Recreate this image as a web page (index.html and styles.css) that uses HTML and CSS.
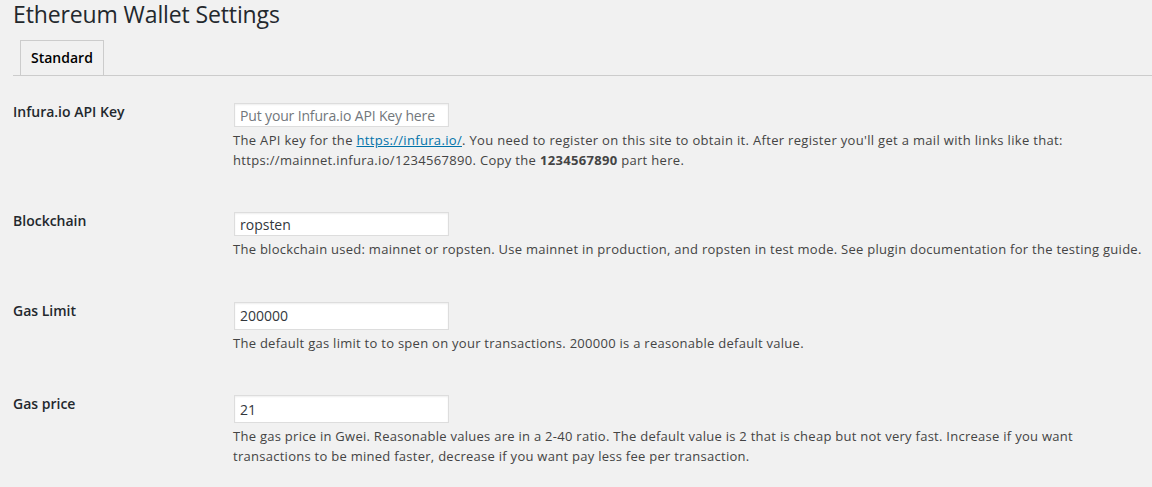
FILE: index.html
```html
<!DOCTYPE html>
<html lang="en">
<head>
<meta charset="utf-8">
<title>Ethereum Wallet Settings</title>
<link rel="stylesheet" href="styles.css">
</head>
<body>
<div class="wrap">
  <h1 class="title">Ethereum Wallet Settings</h1>
  <nav class="tabs">
    <a class="tab tab-active" href="#">Standard</a>
  </nav>
  <div class="form">
    <div class="row">
      <div class="label">Infura.io API Key</div>
      <div class="field">
        <input class="input" type="text" placeholder="Put your Infura.io API Key here">
        <p class="desc desc-wide">The API key for the <a class="link" href="#">https://infura.io/</a>. You need to register on this site to obtain it. After register you'll get a mail with links like that:<br>https://mainnet.infura.io/1234567890. Copy the <strong>1234567890</strong> part here.</p>
      </div>
    </div>
    <div class="row">
      <div class="label">Blockchain</div>
      <div class="field">
        <input class="input" type="text" value="ropsten">
        <p class="desc">The blockchain used: mainnet or ropsten. Use mainnet in production, and ropsten in test mode. See plugin documentation for the testing guide.</p>
      </div>
    </div>
    <div class="row">
      <div class="label">Gas Limit</div>
      <div class="field">
        <input class="input input-tall" type="text" value="200000">
        <p class="desc">The default gas limit to to spen on your transactions. 200000 is a reasonable default value.</p>
      </div>
    </div>
    <div class="row">
      <div class="label">Gas price</div>
      <div class="field">
        <input class="input input-tall" type="text" value="21">
        <p class="desc">The gas price in Gwei. Reasonable values are in a 2-40 ratio. The default value is 2 that is cheap but not very fast. Increase if you want<br>transactions to be mined faster, decrease if you want pay less fee per transaction.</p>
      </div>
    </div>
  </div>
</div>
</body>
</html>
```
FILE: styles.css
```css
html, body {
  margin: 0;
  padding: 0;
  background: #f1f1f1;
}
body {
  font-family: "Open Sans", "Noto Sans", sans-serif;
  color: #444;
  font-size: 13px;
}
.wrap {
  padding-left: 13px;
  padding-top: 0;
}
.title {
  margin: 0;
  font-size: 23px;
  font-weight: 400;
  line-height: 29px;
  letter-spacing: -0.12px;
  color: #23282d;
  height: 40px;
}
.tabs {
  display: flex;
  border-bottom: 1px solid #ccc;
  padding-left: 7px;
}
.tab {
  display: block;
  border: 1px solid #ccc;
  border-bottom: none;
  padding: 5px 10px;
  font-size: 14px;
  line-height: 24px;
  font-weight: 600;
  color: #000;
  text-decoration: none;
  background: #f1f1f1;
}
.form {
  display: flex;
  flex-direction: column;
  gap: 42px;
  padding-top: 27px;
}
.row {
  display: flex;
  align-items: flex-start;
}
.label {
  width: 220px;
  flex: none;
  font-size: 14px;
  font-weight: 600;
  line-height: 18px;
  color: #23282d;
}
.field {
  flex: 1;
  min-width: 0;
}
.input {
  display: block;
  box-sizing: border-box;
  width: 215px;
  height: 24px;
  margin: 0 0 0 1px;
  padding: 0 5px;
  border: 1px solid #ddd;
  background: #fff;
  box-shadow: inset 0 1px 2px rgba(0,0,0,.07);
  font-family: inherit;
  font-size: 14px;
  color: #32373c;
  outline: none;
}
.input::placeholder {
  color: #72777c;
  letter-spacing: -0.15px;
}
.input-tall {
  height: 28px;
}
.desc {
  margin: 4px 0 0;
  font-size: 13px;
  line-height: 19.5px;
  letter-spacing: 0.27px;
  color: #444;
  white-space: nowrap;
}
.desc-wide {
  letter-spacing: 0.32px;
}
.desc strong {
  font-weight: 700;
}
.link {
  color: #0073aa;
  text-decoration: underline;
}
```
